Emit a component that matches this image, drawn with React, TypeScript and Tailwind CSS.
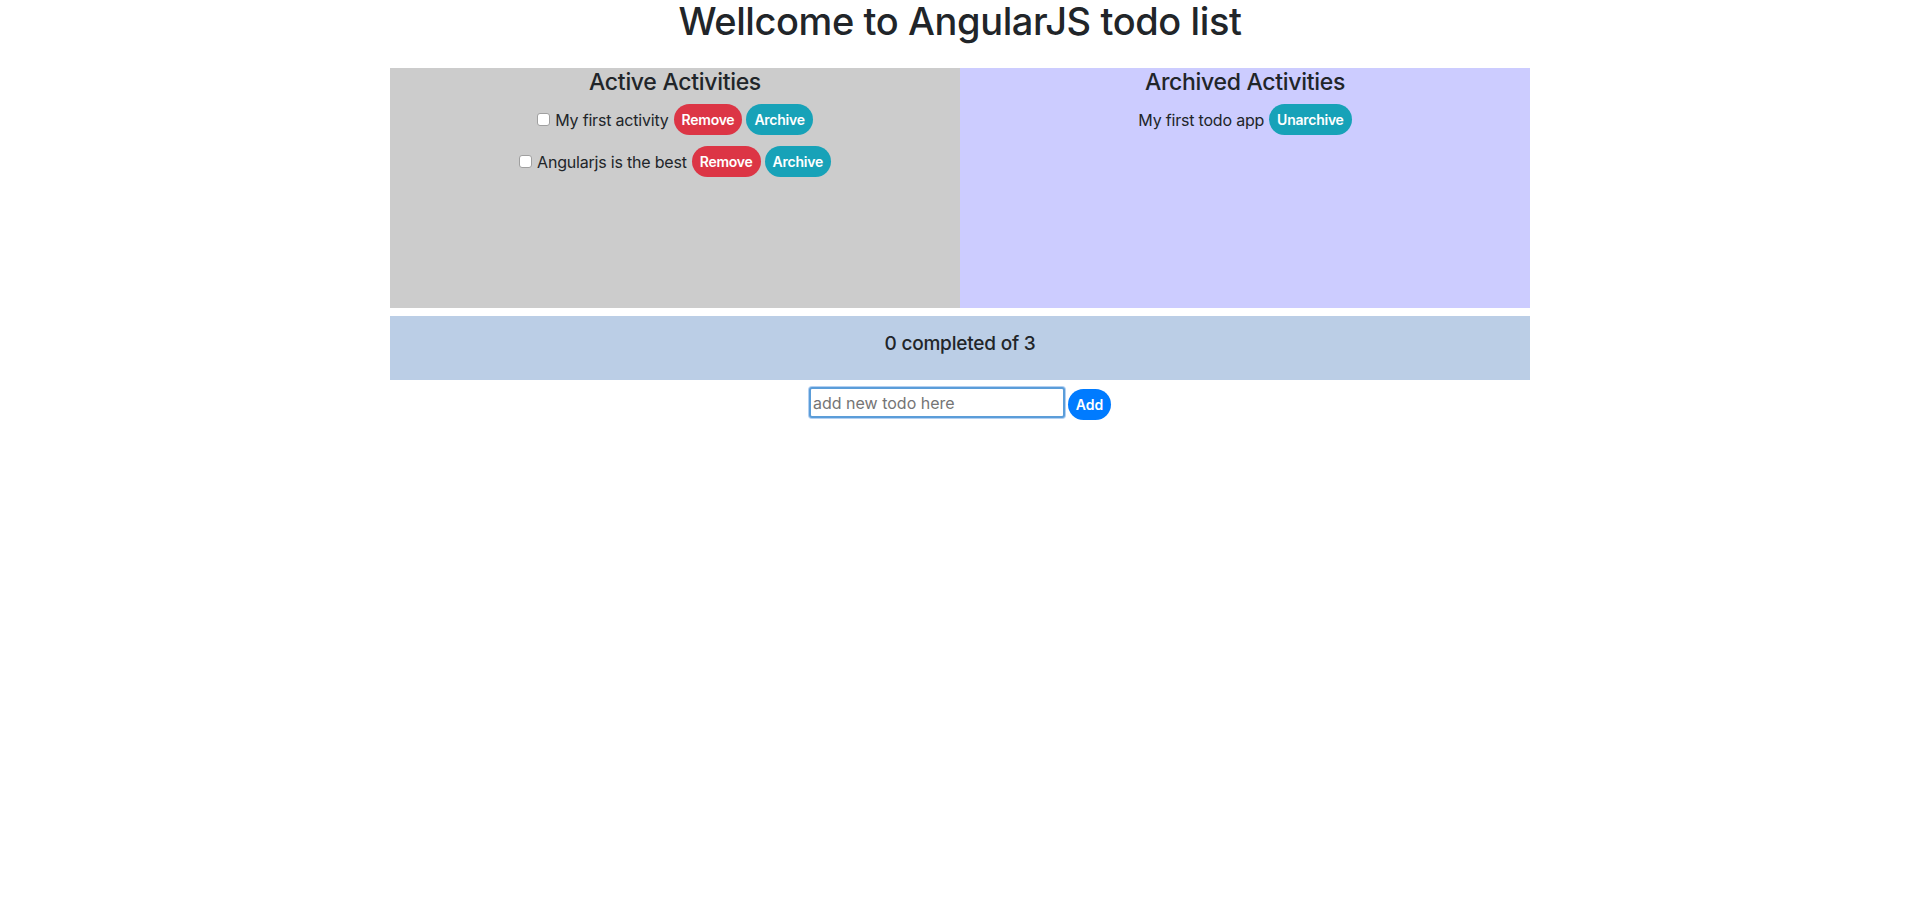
import React from "react";

const font = { fontFamily: "Inter, 'Noto Sans', sans-serif" };

function Btn({ color, children }: { color: string; children: React.ReactNode }) {
  return (
    <button
      className={`${color} text-white rounded-full px-2 h-[31px] text-[14px] font-semibold leading-[21px] tracking-[-0.25px]`}
    >
      {children}
    </button>
  );
}

function ActiveItem({ text }: { text: string }) {
  return (
    <div className="flex items-center justify-center h-[31px]">
      <span className="w-[13px] h-[13px] bg-white border border-[#a0a0a0] rounded-[3px] mr-[5px]" />
      <span className="text-[16px] tracking-[-0.2px] text-[#212529] mr-[5px]">{text}</span>
      <div className="flex gap-[4px]">
        <Btn color="bg-[#dc3545]">Remove</Btn>
        <Btn color="bg-[#17a2b8]">Archive</Btn>
      </div>
    </div>
  );
}

export default function App() {
  return (
    <div className="min-h-[916px] bg-white text-[#212529]" style={font}>
      <h1 className="text-center text-[38px] font-medium leading-[42px] mb-[26px] tracking-[-0.4px]">
        Wellcome to AngularJS todo list
      </h1>
      <div className="w-[1140px] mx-auto">
        <div className="grid grid-cols-2 h-[240px]">
          <div className="bg-[#cccccc]">
            <h4 className="text-center text-[23px] font-medium leading-[29px] mb-[7px] tracking-[-0.3px]">
              Active Activities
            </h4>
            <div className="flex flex-col gap-[11px]">
              <ActiveItem text="My first activity" />
              <ActiveItem text="Angularjs is the best" />
            </div>
          </div>
          <div className="bg-[#ccccff]">
            <h4 className="text-center text-[23px] font-medium leading-[29px] mb-[7px] tracking-[-0.3px]">
              Archived Activities
            </h4>
            <div className="flex items-center justify-center h-[31px]">
              <span className="text-[16px] tracking-[-0.2px] mr-[5px]">My first todo app</span>
              <Btn color="bg-[#17a2b8]">Unarchive</Btn>
            </div>
          </div>
        </div>
        <div className="mt-[8px] bg-[#bbcee6] h-[64px] py-[16px]">
          <h5 className="text-center text-[19px] font-medium leading-[24px] tracking-[-0.2px]">0 completed of 3</h5>
        </div>
        <div className="flex justify-center items-start mt-[7px]">
          <input
            placeholder="add new todo here"
            className="w-[256px] h-[31px] px-[2px] text-[16px] bg-white border-2 border-[#5b9dd9] rounded-[3px] shadow-[0_0_0_1px_#b3d0f2] outline-none placeholder:text-[#757575]"
          />
          <button className="ml-[3px] mt-[2px] w-[43px] h-[31px] rounded-full bg-[#007bff] text-white text-[14px] font-semibold">
            Add
          </button>
        </div>
      </div>
    </div>
  );
}
